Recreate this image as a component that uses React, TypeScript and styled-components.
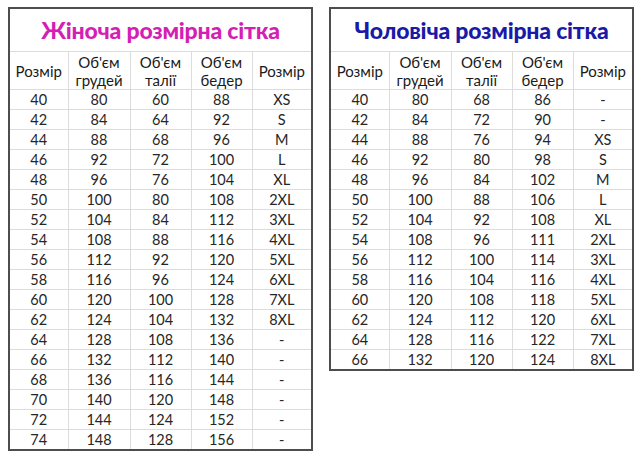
import React from "react";
import styled, { createGlobalStyle } from "styled-components";

const Global = createGlobalStyle`
  html, body { margin: 0; padding: 0; background: #ffffff; }
  body { font-family: Lato, "Liberation Sans", sans-serif; color: #222; }
`;

const Page = styled.div`
  display: flex;
  align-items: flex-start;
  gap: 16px;
  padding: 7px 0 0 8px;
  width: 640px;
  height: 457px;
  box-sizing: border-box;
`;

const Table = styled.table`
  border-collapse: collapse;
  table-layout: fixed;
  width: 304px;
  border: 2px solid #4d4d4d;
  font-size: 14.5px;
`;

const TitleCell = styled.th<{ $color: string }>`
  height: 42px;
  padding: 0;
  color: ${(p) => p.$color};
  font-size: 23px;
  font-weight: 900;
  text-align: center;
  border-bottom: 1px solid #dcdcdc;
  letter-spacing: -0.2px;
`;

const HeadCell = styled.th`
  height: 37px;
  padding: 0;
  font-weight: 400;
  font-size: 15px;
  line-height: 18px;
  text-align: center;
  border: 1px solid #dcdcdc;
  color: #1a1a1a;
`;

const Cell = styled.td`
  height: 19px;
  padding: 0;
  text-align: center;
  border: 1px solid #dcdcdc;
  line-height: 19px;
  color: #262626;
`;

type Row = [string, string, string, string, string];

const women: Row[] = [
  ["40", "80", "60", "88", "XS"],
  ["42", "84", "64", "92", "S"],
  ["44", "88", "68", "96", "M"],
  ["46", "92", "72", "100", "L"],
  ["48", "96", "76", "104", "XL"],
  ["50", "100", "80", "108", "2XL"],
  ["52", "104", "84", "112", "3XL"],
  ["54", "108", "88", "116", "4XL"],
  ["56", "112", "92", "120", "5XL"],
  ["58", "116", "96", "124", "6XL"],
  ["60", "120", "100", "128", "7XL"],
  ["62", "124", "104", "132", "8XL"],
  ["64", "128", "108", "136", "-"],
  ["66", "132", "112", "140", "-"],
  ["68", "136", "116", "144", "-"],
  ["70", "140", "120", "148", "-"],
  ["72", "144", "124", "152", "-"],
  ["74", "148", "128", "156", "-"],
];

const men: Row[] = [
  ["40", "80", "68", "86", "-"],
  ["42", "84", "72", "90", "-"],
  ["44", "88", "76", "94", "XS"],
  ["46", "92", "80", "98", "S"],
  ["48", "96", "84", "102", "M"],
  ["50", "100", "88", "106", "L"],
  ["52", "104", "92", "108", "XL"],
  ["54", "108", "96", "111", "2XL"],
  ["56", "112", "100", "114", "3XL"],
  ["58", "116", "104", "116", "4XL"],
  ["60", "120", "108", "118", "5XL"],
  ["62", "124", "112", "120", "6XL"],
  ["64", "128", "116", "122", "7XL"],
  ["66", "132", "120", "124", "8XL"],
];

const widths = [59, 62, 61, 61, 60];

function SizeTable({ title, color, rows }: { title: string; color: string; rows: Row[] }) {
  return (
    <Table>
      <colgroup>
        {widths.map((w, i) => (
          <col key={i} style={{ width: w }} />
        ))}
      </colgroup>
      <thead>
        <tr>
          <TitleCell colSpan={5} $color={color}>{title}</TitleCell>
        </tr>
        <tr>
          <HeadCell>Розмір</HeadCell>
          <HeadCell>Об'єм<br />грудей</HeadCell>
          <HeadCell>Об'єм<br />талії</HeadCell>
          <HeadCell>Об'єм<br />бедер</HeadCell>
          <HeadCell>Розмір</HeadCell>
        </tr>
      </thead>
      <tbody>
        {rows.map((r, i) => (
          <tr key={i}>
            {r.map((c, j) => (
              <Cell key={j}>{c}</Cell>
            ))}
          </tr>
        ))}
      </tbody>
    </Table>
  );
}

export default function App() {
  return (
    <>
      <Global />
      <Page>
        <SizeTable title="Жіноча розмірна сітка" color="#d41fb5" rows={women} />
        <SizeTable title="Чоловіча розмірна сітка" color="#1a1aa6" rows={men} />
      </Page>
    </>
  );
}
